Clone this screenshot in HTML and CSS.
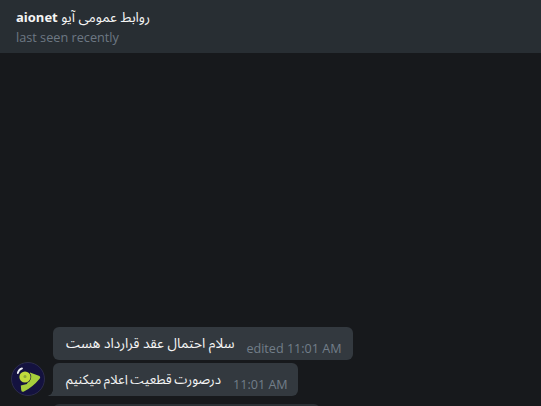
FILE: index.html
```html
<!DOCTYPE html>
<html lang="fa">
<head>
<meta charset="utf-8">
<title>aionet</title>
<link rel="stylesheet" href="styles.css">
</head>
<body>
<div class="app">
  <header class="topbar">
    <div class="title"><b class="title-latin">aionet</b> <span class="fa">روابط عمومی آیو</span></div>
    <div class="status">last seen recently</div>
  </header>
  <main class="history">
    <div class="group">
      <div class="avatar">
        <svg viewBox="0 0 34 34" width="34" height="34">
          <circle cx="17" cy="17" r="16.5" fill="#14123f" stroke="#3a3a5c" stroke-width="0.6"/>
          <path d="M19 10.5 L28.5 14 Q29.8 15 28.8 16.5 Q22 25 12.5 29.8 Q10.5 30.2 10.2 28 L9.8 23.5 L16 22 Z" fill="#a6ce3c"/>
          <circle cx="14" cy="15" r="6.2" fill="#14123f"/>
          <circle cx="14" cy="15" r="5.6" fill="#c0da3c"/>
          <circle cx="14" cy="14.5" r="1.5" fill="#8aa53a"/>
          <path d="M6.8 11 Q7.6 7.4 11 6.4" fill="none" stroke="#eef0f2" stroke-width="1.8" stroke-linecap="round"/>
        </svg>
      </div>
      <div class="messages">
        <div class="bubble bubble-first">
          <span class="text fa" dir="rtl">سلام احتمال عقد قرارداد هست</span>
          <span class="meta">edited 11:01 AM</span>
        </div>
        <div class="bubble bubble-last">
          <span class="text fa fa-tight" dir="rtl">درصورت قطعیت اعلام میکنیم</span>
          <span class="meta">11:01 AM</span>
        </div>
        <div class="bubble bubble-next"></div>
      </div>
    </div>
  </main>
</div>
</body>
</html>
```
FILE: styles.css
```css
* { box-sizing: border-box; }
html, body { margin: 0; height: 100%; }
body {
  background: #17191c;
  font-family: "Open Sans", "DejaVu Sans", sans-serif;
  overflow: hidden;
}
.app { display: flex; flex-direction: column; height: 406px; }
.topbar {
  height: 53px;
  flex: none;
  background: #282e33;
  padding: 8px 16px 0;
}
.title { font-size: 13px; line-height: 18px; color: #f5f5f5; }
.title-latin { font-weight: 700; }
.status { font-size: 12.7px; line-height: 18px; margin-top: 2px; color: #6d7883; }
.fa { font-family: "Noto Sans Arabic", "DejaVu Sans", sans-serif; font-size: 13.7px; line-height: 16px; }
.fa-tight { font-size: 13.2px; word-spacing: -1px; }
.history {
  flex: 1;
  min-height: 0;
  overflow: hidden;
  padding: 274px 0 0 11px;
}
.group { display: flex; align-items: flex-start; gap: 8px; position: relative; }
.avatar { width: 34px; height: 34px; flex: none; margin-top: 35px; }
.avatar svg { display: block; }
.messages { display: flex; flex-direction: column; align-items: flex-start; gap: 3px; }
.bubble {
  height: 33px;
  display: flex;
  align-items: center;
  background: #33393f;
  border-radius: 6px;
  padding: 0 10px 0 13px;
  position: relative;
}
.bubble-first { padding-right: 11px; }
.bubble-last { border-bottom-left-radius: 0; }
.bubble-last::before {
  content: "";
  position: absolute;
  left: -6px;
  bottom: 0;
  width: 6px;
  height: 6px;
  background: radial-gradient(circle at 0 0, transparent 5.5px, #33393f 6px);
}
.bubble-next { width: 267px; margin-top: 5px; background: #2b3035; }
.text { color: #f5f5f5; }
.meta { font-size: 12.6px; line-height: 16px; color: #727e89; margin-left: 12px; margin-top: 10px; white-space: nowrap; }
```
